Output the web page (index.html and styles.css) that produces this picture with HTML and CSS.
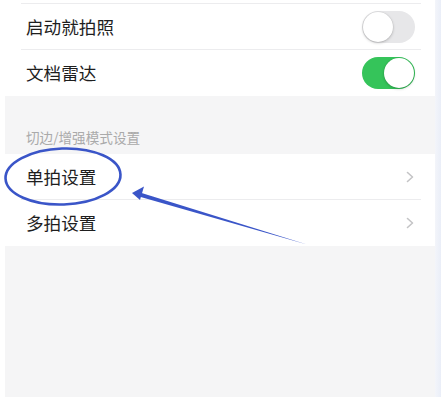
FILE: index.html
```html
<!DOCTYPE html>
<html lang="zh">
<head>
<meta charset="utf-8">
<link rel="stylesheet" href="styles.css">
</head>
<body>
<div class="frame">
  <div class="screen">
    <div class="panel">
      <div class="row stub"></div>
      <div class="row">
        <span class="label">启动就拍照</span>
        <span class="toggle"><span class="knob"></span></span>
      </div>
      <div class="row last">
        <span class="label">文档雷达</span>
        <span class="toggle on"><span class="knob"></span></span>
      </div>
    </div>
    <div class="section-header">切边/增强模式设置</div>
    <div class="panel">
      <div class="row">
        <span class="label">单拍设置</span>
        <svg class="chevron" width="8" height="12" viewBox="0 0 8 12"><path d="M1.5 1.5 L6.5 6 L1.5 10.5" fill="none" stroke="#c4c4c6" stroke-width="1.6" stroke-linecap="round" stroke-linejoin="round"/></svg>
      </div>
      <div class="row last">
        <span class="label">多拍设置</span>
        <svg class="chevron" width="8" height="12" viewBox="0 0 8 12"><path d="M1.5 1.5 L6.5 6 L1.5 10.5" fill="none" stroke="#c4c4c6" stroke-width="1.6" stroke-linecap="round" stroke-linejoin="round"/></svg>
      </div>
    </div>
  </div>
  <div class="edge"></div>
</div>
<svg class="annotation" width="441" height="397" viewBox="0 0 441 397">
  <ellipse cx="63" cy="176.5" rx="57.5" ry="28" fill="none" stroke="#3a55c8" stroke-width="2.6" transform="rotate(-2 63 176.5)"/>
  <path d="M140 192.5 L307 244.5 L139 196.5 Z" fill="#3a55c8"/>
  <path d="M132 193 L144 186.5 L140 200 Z" fill="#3a55c8"/>
</svg>
</body>
</html>
```

FILE: styles.css
```css
html, body {
  margin: 0;
  padding: 0;
}
body {
  background: #ffffff;
  font-family: "Noto Sans CJK SC", "Noto Sans", sans-serif;
  width: 441px;
  height: 397px;
  overflow: hidden;
  position: relative;
}
.frame {
  display: flex;
  height: 397px;
  padding-left: 5px;
}
.screen {
  width: 430px;
  background: #f5f5f6;
  display: flex;
  flex-direction: column;
}
.edge {
  width: 6px;
  background: linear-gradient(90deg, #f3f5fa, #eaeef8);
}
.panel {
  background: #ffffff;
  display: flex;
  flex-direction: column;
}
.row {
  margin-left: 16px;
  margin-right: 14px;
  padding-left: 5px;
  padding-right: 6px;
  height: 45px;
  border-bottom: 1px solid #ececee;
  display: flex;
  align-items: center;
  justify-content: space-between;
}
.row.stub {
  height: 3px;
}
.row.last {
  height: 46px;
  border-bottom: none;
}
.label {
  font-size: 17.6px;
  color: #1e1e1e;
  line-height: 24px;
}
.toggle {
  width: 53px;
  height: 32px;
  border-radius: 16px;
  background: #e7e7e9;
  position: relative;
  box-sizing: border-box;
}
.toggle .knob {
  position: absolute;
  left: 1px;
  top: 1px;
  width: 30px;
  height: 30px;
  border-radius: 50%;
  background: #ffffff;
  box-shadow: 0 1px 3px rgba(0,0,0,0.22), 0 0 0 0.5px rgba(0,0,0,0.06);
}
.toggle.on {
  background: #35c45a;
}
.toggle.on .knob {
  left: 22px;
}
.chevron {
  margin-right: 1px;
}
.section-header {
  font-size: 13.6px;
  color: #aaaaaa;
  line-height: 20px;
  padding: 31px 0 7px 21px;
}
.annotation {
  position: absolute;
  left: 0;
  top: 0;
  pointer-events: none;
}
```
